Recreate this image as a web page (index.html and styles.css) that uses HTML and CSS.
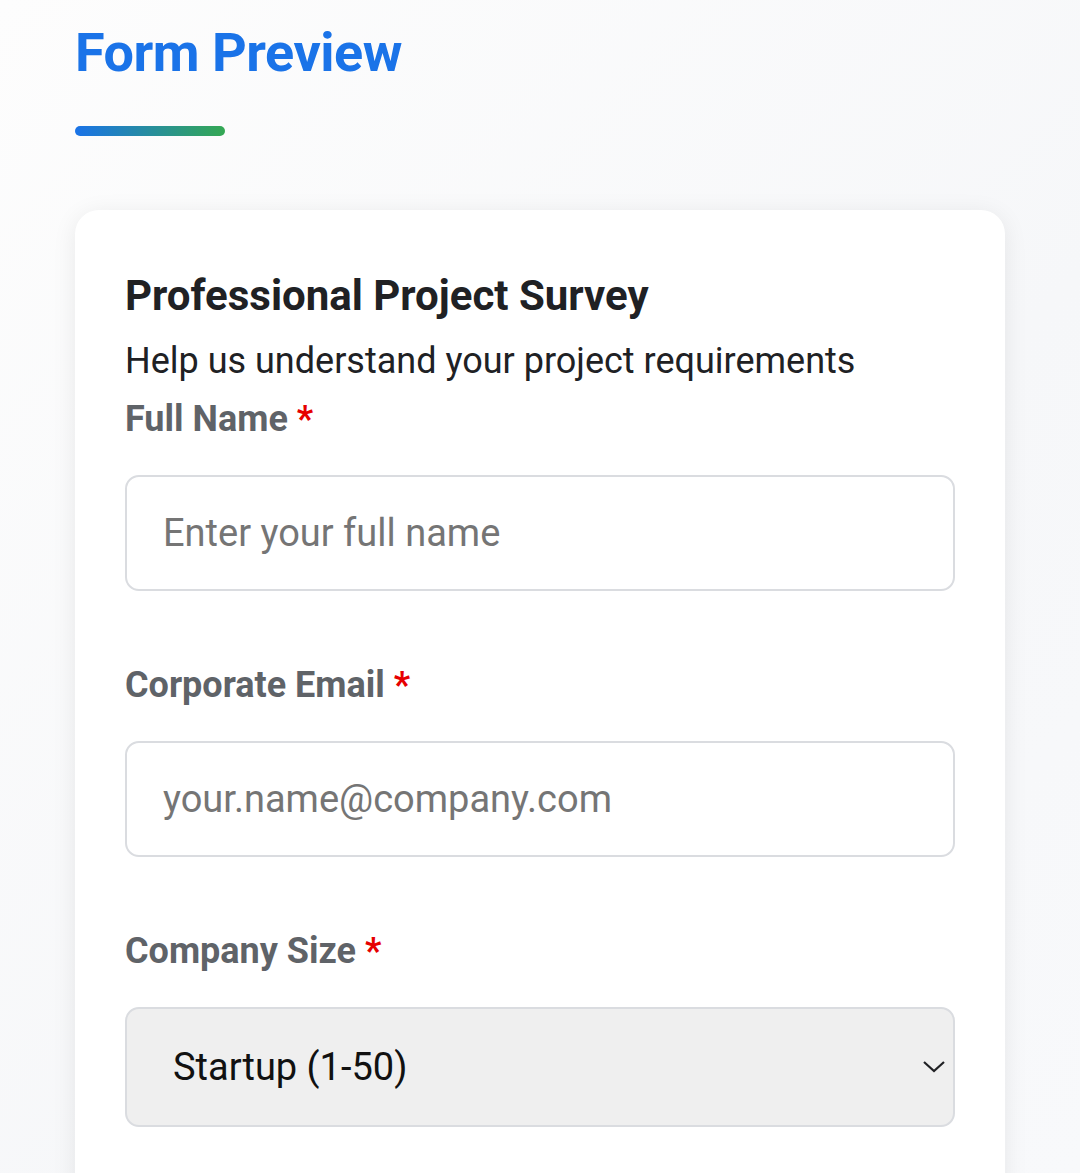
FILE: index.html
```html
<!DOCTYPE html>
<html lang="en">
<head>
<meta charset="utf-8">
<title>Form Preview</title>
<link rel="stylesheet" href="styles.css">
</head>
<body>
<main class="page">
  <h1 class="page-title">Form Preview</h1>
  <div class="title-bar"></div>
  <section class="card">
    <h2 class="card-title">Professional Project Survey</h2>
    <p class="card-sub">Help us understand your project requirements</p>
    <div class="field">
      <label class="label" for="name">Full Name <span class="req">*</span></label>
      <input class="input" id="name" type="text" placeholder="Enter your full name">
    </div>
    <div class="field">
      <label class="label" for="email">Corporate Email <span class="req">*</span></label>
      <input class="input" id="email" type="email" placeholder="your.name@company.com">
    </div>
    <div class="field">
      <label class="label" for="size">Company Size <span class="req">*</span></label>
      <div class="select-wrap">
        <select class="select" id="size">
          <option>Startup (1-50)</option>
          <option>Mid-size (51-500)</option>
          <option>Enterprise (500+)</option>
        </select>
        <svg class="chev" width="24" height="14" viewBox="0 0 24 14" aria-hidden="true"><path d="M2 2 L12 11 L22 2" fill="none" stroke="#202124" stroke-width="2.2"/></svg>
      </div>
    </div>
  </section>
</main>
</body>
</html>
```

FILE: styles.css
```css
* { box-sizing: border-box; }
html, body { margin: 0; height: 100%; }
body {
  font-family: Roboto, "Noto Sans", "Liberation Sans", sans-serif;
  background: linear-gradient(135deg, #fdfdfd 0%, #f6f7f9 60%, #f8f9fb 100%);
  overflow: hidden;
}
.page {
  padding: 19px 75px 0 75px;
}
.page-title {
  margin: 0;
  font-size: 54px;
  line-height: 67px;
  font-weight: 700;
  color: #1a73e8;
  letter-spacing: -0.5px;
}
.title-bar {
  width: 150px;
  height: 10px;
  margin-top: 40px;
  border-radius: 5px;
  background: linear-gradient(90deg, #1a73e8, #34a853);
}
.card {
  margin-top: 74px;
  background: #fff;
  border-radius: 24px;
  box-shadow: 0 4px 24px rgba(0, 0, 0, 0.08);
  padding: 61px 50px 60px 50px;
  min-height: 1000px;
}
.card-title {
  margin: 0;
  font-size: 42px;
  line-height: 50px;
  font-weight: 700;
  color: #202124;
}
.card-sub {
  margin: 19px 0 0 0;
  font-size: 36px;
  line-height: 42px;
  color: #202124;
}
.field { margin-bottom: 73px; }
.field:first-of-type { margin-top: 16px; }
.label {
  display: block;
  font-size: 36px;
  line-height: 42px;
  font-weight: 700;
  color: #5f6368;
  margin-bottom: 35px;
}
.req { color: #e60000; }
.input {
  display: block;
  width: 100%;
  height: 116px;
  padding: 0 36px;
  border: 2px solid #dadce0;
  border-radius: 14px;
  background: #fff;
  font-family: inherit;
  font-size: 38px;
  color: #202124;
  outline: none;
}
.input::placeholder { color: #757575; }
.select-wrap { position: relative; }
.select {
  display: block;
  width: 100%;
  height: 120px;
  padding: 0 46px;
  border: 2px solid #dadce0;
  border-radius: 14px;
  background: #efefef;
  font-family: inherit;
  font-size: 38px;
  color: #111;
  appearance: none;
  -webkit-appearance: none;
  outline: none;
}
.chev {
  position: absolute;
  right: 9px;
  top: 53px;
  width: 24px;
  height: 14px;
  pointer-events: none;
}
```
